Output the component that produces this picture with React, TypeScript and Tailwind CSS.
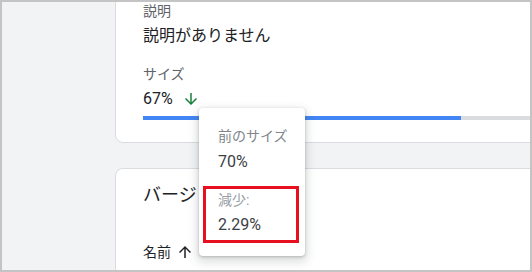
import { ReactNode } from 'react'

const font = { fontFamily: "Roboto, 'Noto Sans CJK JP', sans-serif" }

function ArrowDown({ className }: { className?: string }) {
  return (
    <svg viewBox="0 0 24 24" className={className} fill="currentColor">
      <path d="M20 12l-1.41-1.41L13 16.17V4h-2v12.17l-5.58-5.59L4 12l8 8 8-8z" />
    </svg>
  )
}

function ArrowUp({ className }: { className?: string }) {
  return (
    <svg viewBox="0 0 24 24" className={className} fill="currentColor">
      <path d="M4 12l1.41 1.41L11 7.83V20h2V7.83l5.58 5.59L20 12l-8-8-8 8z" />
    </svg>
  )
}

function Card({ children, className = '' }: { children: ReactNode; className?: string }) {
  return (
    <div className={`w-[620px] rounded-lg border border-[#dadce0] bg-white pl-[27px] ${className}`}>
      {children}
    </div>
  )
}

export default function App() {
  const pct = 67

  return (
    <div className="h-[272px] w-[532px] border-2 border-[#c4c4c4]" style={font}>
      <div className="relative h-full w-full overflow-hidden bg-[#f1f3f4]">
        <div className="flex flex-col pl-[113px]">
          <Card className="-mt-[20px] pt-[18px] pb-[22px]">
            <div className="text-[14px] leading-5 text-[#5f6368]">説明</div>
            <div className="mt-[3px] text-[16px] leading-6 text-[#202124]">説明がありません</div>
            <div className="mt-4 text-[14px] leading-5 text-[#5f6368]">サイズ</div>
            <div className="mt-[3px] flex items-center text-[16px] leading-6 text-[#202124]">
              <span>{pct}%</span>
              <ArrowDown className="ml-[9px] h-[18px] w-[18px] text-[#188038]" />
            </div>
            <div className="mt-[5px] h-1 w-[475px] bg-[#dadce0]">
              <div className="h-full bg-[#4285f4]" style={{ width: `${pct}%` }} />
            </div>
          </Card>

          <Card className="mt-[25px] pt-[14px] pb-6">
            <div className="text-[18px] leading-6 text-[#202124]">バージ</div>
            <div className="mt-[35px] flex items-center text-[14px] leading-5 text-[#202124]">
              <span>名前</span>
              <ArrowUp className="ml-[5px] h-[18px] w-[18px] text-[#202124]" />
            </div>
          </Card>
        </div>

        <div className="absolute left-[197px] top-[106px] h-[148px] w-[106px] rounded bg-white shadow-[0_1px_3px_rgba(60,64,67,0.3),0_4px_8px_3px_rgba(60,64,67,0.15)]">
          <div className="pl-[19px] pt-[18px]">
            <div className="text-[14px] leading-5 text-[#80868b]">前のサイズ</div>
            <div className="mt-1 text-[16px] leading-6 text-[#3c4043]">70%</div>
          </div>
          <div className="ml-1 mt-3 w-[96px] border-[3px] border-[#e8101e] pb-[3px] pl-3 pt-px">
            <div className="text-[14px] leading-5 text-[#9aa0a6]">減少:</div>
            <div className="mt-[3px] text-[16px] leading-6 text-[#3c4043]">2.29%</div>
          </div>
        </div>
      </div>
    </div>
  )
}
